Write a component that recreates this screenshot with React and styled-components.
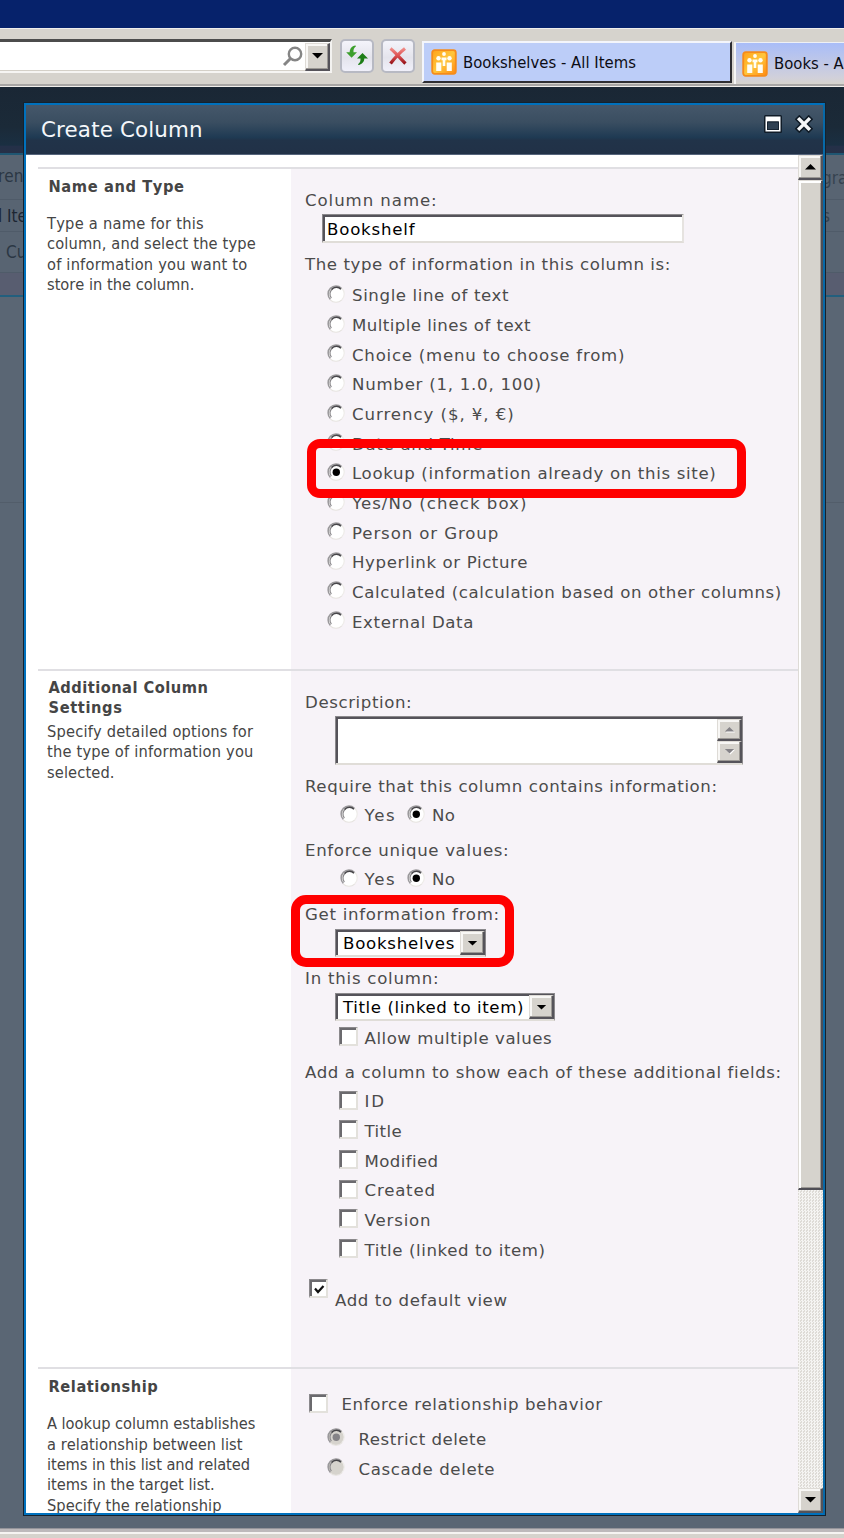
import React from 'react';
import styled, { createGlobalStyle, css } from 'styled-components';

const wide = `'DejaVu Sans', Verdana, sans-serif`;
const narrow = `'DejaVu Sans Condensed', 'DejaVu Sans', Tahoma, sans-serif`;

const GlobalStyle = createGlobalStyle`
  *, *::before, *::after { box-sizing: border-box; }
  html, body { margin: 0; padding: 0; }
  body { width: 844px; height: 1538px; overflow: hidden; background: #5a6674; font-kerning: none; }
`;

const narrowText = css`
  font-family: ${narrow};
  font-stretch: condensed;
  white-space: nowrap;
`;

/* ---------- browser chrome ---------- */

const Screen = styled.div`
  position: relative;
  display: flex;
  flex-direction: column;
  width: 844px;
  height: 1538px;
  overflow: hidden;
  background: #5a6674;
`;

const WindowTitle = styled.div`
  flex: none;
  height: 28px;
  background: #06226b;
`;

const Toolbar = styled.div`
  flex: none;
  display: flex;
  align-items: flex-start;
  height: 59px;
  padding-top: 10px;
  background: #d6d3cd;
  border-top: 1px solid #efeeec;
  border-bottom: 1px solid #f1efec;
  box-shadow: inset 0 -2px 0 #a8a6a5;
  overflow: hidden;
`;

const AddressBar = styled.div`
  flex: none;
  display: flex;
  align-items: center;
  justify-content: flex-end;
  width: 332px;
  height: 34px;
  margin-right: 8px;
  background: #fff;
  border-top: 3px solid #4c4c4c;
  border-right: 2px solid #f3f2f0;
  border-bottom: 2px solid #f6f5f3;
  box-shadow: inset 0 -1px 0 #d4d0c8;
`;

const DropButton = styled.div`
  flex: none;
  display: flex;
  align-items: center;
  justify-content: center;
  width: ${(p) => p.$w || 25}px;
  height: ${(p) => p.$h || 27}px;
  background: #d6d3cd;
  border-style: solid;
  border-width: 1px 2px 2px 1px;
  border-color: #dedbd6 #55535a #55535a #dedbd6;
  box-shadow: inset -1px -1px 0 #9b9894, inset 2px 2px 0 #f8f7f5;
`;

const ToolButton = styled.div`
  flex: none;
  display: flex;
  align-items: center;
  justify-content: center;
  width: 34px;
  height: 34px;
  margin-right: 7px;
  border: 2px solid #b7b9c3;
  border-radius: 5px;
  background: linear-gradient(#f4f4fb, #e4e4ec 55%, #f0f0fa);
`;

const Tab = styled.div`
  flex: none;
  display: flex;
  align-items: center;
  gap: 6px;
  ${narrowText}
  font-size: 16.5px;
  color: #0c0c14;
  ${(p) =>
    p.$active
      ? css`
          width: 310px;
          height: 42px;
          margin: 2px 2px 0 0;
          padding: 0 0 0 7px;
          background: #bccdf8;
          border-style: solid;
          border-width: 2px;
          border-color: #f3f5fb #2e2e33 #2e2e33 #f3f5fb;
        `
      : css`
          width: 200px;
          height: 42px;
          margin-top: 3px;
          padding: 0 0 0 6px;
          background: linear-gradient(#a9bdf8, #d1d0da 85%, #d6d3cd);
          border-left: 2px solid #f6f6f6;
          border-top: 1px solid #eef0f5;
        `}
`;

const TabLabel = styled.span`
  letter-spacing: 0.02px;
`;

/* ---------- dimmed page behind the dialog ---------- */

const Backdrop = styled.div`
  flex: 1;
  display: flex;
  flex-direction: column;
  background: #5a6674;
`;

const SiteHeader = styled.div`
  height: 68px;
  background: linear-gradient(#1a2735 0%, #1b2a38 60%, #1a2f42 88%, #243048 90%, #263047 100%);
  border-bottom: 2px solid #1f5672;
`;

const RibbonRow = styled.div`
  display: flex;
  justify-content: space-between;
  align-items: center;
  height: ${(p) => p.$h}px;
  padding: 0 0 0 ${(p) => p.$indent || 0}px;
  background: ${(p) => p.$bg || '#586472'};
  border-bottom: ${(p) => p.$line || '1px solid #4f5b69'};
  overflow: hidden;
  ${narrowText}
  font-size: 17px;
  color: ${(p) => p.$color || '#2b3744'};
`;

const RibbonStart = styled.span`
  margin-left: -2px;
  margin-top: ${(p) => p.$shift || 0}px;
`;

const RibbonEnd = styled.span`
  width: 22px;
  padding-top: ${(p) => p.$drop}px;
  color: #35424f;
`;

const PageArea = styled.div`
  height: 206px;
  border-bottom: 1px solid #525d6a;
`;

const StatusBar = styled.div`
  flex: none;
  height: 10px;
  background: #d6d3cd;
  border-top: 1px solid #94949a;
  box-shadow: inset 0 3px 0 #bdb9bb, inset 0 5px 0 #f6f4f2;
`;

/* ---------- dialog ---------- */

const Dialog = styled.div`
  position: absolute;
  left: 24px;
  top: 103px;
  width: 801px;
  height: 1412px;
  display: flex;
  flex-direction: column;
  border: 2px solid #0071bd;
  border-right-color: #0769a8;
  box-shadow: 0 0 0 1px #15222e;
  background: #fff;
`;

const DialogTitle = styled.div`
  flex: none;
  display: flex;
  align-items: flex-start;
  height: 50px;
  padding: 9px 10px 0 15px;
  background: linear-gradient(#45576a 0%, #3a4e61 35%, #1f3a53 66%, #213349 72%, #213147 100%);
  border-bottom: 1px solid #56657c;
`;

const DialogName = styled.h1`
  flex: 1;
  margin: 0;
  font: 400 21.4px/32px ${wide};
  letter-spacing: 0.15px;
  color: #f4f7fa;
`;

const WindowIcons = styled.div`
  display: flex;
  gap: 12px;
  align-items: center;
`;

const DialogBody = styled.div`
  flex: 1;
  display: flex;
  min-height: 0;
`;

const Form = styled.div`
  width: 772px;
  padding: 12px 0 0 12px;
  overflow: hidden;
`;

const Section = styled.section`
  position: relative;
  display: flex;
  height: ${(p) => p.$h}px;
  border-top: 2px solid #e0dfe3;
`;

const Aside = styled.div`
  flex: none;
  width: 253px;
  padding: ${(p) => p.$top ?? 8}px 0 0 9px;
  ${narrowText}
  color: #454545;
`;

const Heading = styled.h2`
  margin: 0 0 ${(p) => p.$gap}px 1.5px;
  font-size: 16.3px;
  font-weight: 700;
  line-height: 20.4px;
  letter-spacing: ${(p) => p.$ls ?? 0.5}px;
`;

const Help = styled.p`
  margin: 0;
  font-size: 16.3px;
  line-height: 20.35px;
`;

const Line = styled.span`
  display: block;
  letter-spacing: ${(p) => p.$ls ?? 0.12}px;
`;

const Fields = styled.div`
  flex: 1;
  padding: ${(p) => p.$top}px 0 0 14px;
  background: #f7f3f8;
  font: 16.6px/22px ${wide};
  color: #4b4b4b;
  white-space: nowrap;
`;

const Label = styled.div`
  height: 22px;
  margin-top: ${(p) => p.$mt || 0}px;
  letter-spacing: ${(p) => p.$ls ?? 0.57}px;
`;

const Row = styled.div`
  display: flex;
  align-items: center;
  height: 29.67px;
  margin-top: ${(p) => p.$mt || 0}px;
  padding-left: ${(p) => p.$indent}px;
`;

const Caption = styled.span`
  margin-left: ${(p) => p.$gap ?? 7}px;
  margin-right: ${(p) => p.$after || 0}px;
  margin-top: ${(p) => p.$drop || 0}px;
  letter-spacing: ${(p) => p.$ls ?? 0.57}px;
`;

const sunken = css`
  background: #fff;
  border-style: solid;
  border-width: 1px 2px 2px 1px;
  border-color: #8b898c #e6e3e0 #e0ddd8 #8b898c;
  box-shadow: inset 2px 2px 0 #55535a;
`;

const TextInput = styled.div`
  ${sunken}
  width: 362px;
  height: 29px;
  margin: 2px 0 0 17px;
  padding: 3px 0 0 4px;
  line-height: 24px;
  letter-spacing: 0.8px;
  color: #000;
`;

const TextArea = styled.div`
  ${sunken}
  display: flex;
  justify-content: flex-end;
  width: 408px;
  height: 49px;
  margin: 2.5px 0 0 30px;
  padding-top: 2px;
  border-right: 1px solid #8b898c;
`;

const Spinner = styled.div`
  display: flex;
  flex-direction: column;
`;

const Select = styled.div`
  ${sunken}
  display: flex;
  justify-content: space-between;
  align-items: center;
  width: ${(p) => p.$w}px;
  height: 28px;
  margin: ${(p) => p.$mt}px 0 0 30px;
  padding: 2px 0 0 7px;
  border-right: 1px solid #8b898c;
  color: #000;
  letter-spacing: ${(p) => p.$ls}px;
`;

const SelectValue = styled.span`
  padding-top: 2px;
`;

const Box = styled.span`
  flex: none;
  display: flex;
  align-items: center;
  justify-content: center;
  width: 19px;
  height: 19px;
  margin-bottom: ${(p) => p.$lift ?? 4}px;
  padding: 2px 0 0 2px;
  background: #fff;
  border-style: solid;
  border-width: 1px 2px 2px 1px;
  border-color: #8b898c #e3e1dc #e3e1dc #8b898c;
  box-shadow: inset 2px 2px 0 #6b6a6e;
`;

const RadioMark = styled.svg`
  flex: none;
  width: 18px;
  height: 18px;
  margin-bottom: 5px;
`;

const Highlight = styled.div`
  position: absolute;
  left: ${(p) => p.$x}px;
  top: ${(p) => p.$y}px;
  width: ${(p) => p.$w}px;
  height: ${(p) => p.$h}px;
  border: 9px solid #ff0000;
  border-radius: ${(p) => p.$r}px;
`;

/* ---------- scrollbar ---------- */

const ScrollTrack = styled.div`
  display: flex;
  flex-direction: column;
  width: 25px;
  background: repeating-conic-gradient(#f5f4f2 0 25%, #dedbd6 0 50%) 0 0 / 3px 3px;
`;

const ScrollThumb = styled.div`
  height: 1010px;
  background: #d6d3cd;
  border-style: solid;
  border-width: 1px 2px 2px 1px;
  border-color: #dedbd6 #4f4e55 #4f4e55 #dedbd6;
  box-shadow: inset 2px 2px 0 #fff, inset -1px -1px 0 #9b9894;
`;

const TrackGap = styled.div`
  flex: 1;
`;

/* ---------- drawings ---------- */

const Arrow = ({ up, size = 11, color = '#000', shade }) => (
  <svg width={size + 2} height={size / 2 + 2} viewBox="0 0 13 7.5">
    {shade && <path d={up ? 'M2 7.5h11L7.5 2z' : 'M2 2h11L7.5 7.5z'} fill="#fff" />}
    <path d={up ? 'M1 6.5h11L6.5 1z' : 'M1 1h11L6.5 6.5z'} fill={color} />
  </svg>
);

const Radio = ({ on, disabled }) => (
  <RadioMark viewBox="0 0 18 18">
    <circle cx="9" cy="9" r="8.2" fill={disabled ? '#d6d3cd' : '#fff'} />
    <path d="M14.8 14.8A8.1 8.1 0 0 1 3.2 14.8" stroke="#e6e3df" strokeWidth="1.2" fill="none" />
    <path d="M14.8 3.2A8.1 8.1 0 0 1 14.8 14.8" stroke="#eeece9" strokeWidth="1.2" fill="none" />
    <path d="M3.4 14.4A7.7 7.7 0 0 1 14.4 3.4" stroke="#9a989b" strokeWidth="1.5" fill="none" />
    <path d="M4.4 13A6.3 6.3 0 0 1 5.2 4.2" stroke="#8b898c" strokeWidth="1.2" fill="none" />
    <path d="M4.6 4.6A6.3 6.3 0 0 1 14 4.2" stroke="#47464a" strokeWidth="1.6" fill="none" />
    {on && <circle cx="9.3" cy="9.3" r="3.7" fill={disabled ? '#858387' : '#000'} />}
  </RadioMark>
);

const Check = ({ on, lift }) => (
  <Box $lift={lift}>
    {on && (
      <svg width="13" height="13" viewBox="0 0 13 13">
        <path d="M2 5.5L5 9l5.5-6" stroke="#111" strokeWidth="2.2" fill="none" />
      </svg>
    )}
  </Box>
);

const Magnifier = () => (
  <svg width="24" height="24" viewBox="0 0 24 24" fill="none" stroke="#858585">
    <circle cx="14" cy="9" r="6.2" strokeWidth="2.4" />
    <path d="M9.5 13.5L3 20" strokeWidth="3" />
  </svg>
);

const RefreshIcon = () => (
  <svg width="26" height="26" viewBox="0 0 26 26">
    <path d="M11.500 2.500C7.500 3 5.800 6 5.700 9.300H2.200L7.600 14.800 13 9.300H9.500C9.300 6.500 9.900 4.700 12 3.300z" fill="#3c9f2c" />
    <path d="M14.500 22C18.200 21.300 20.300 18.500 20.300 15.500H24L18.500 10 13 15.500H16.500C16.600 18 16.200 19.800 14 21.200z" fill="#1d7d16" />
  </svg>
);

const StopIcon = () => (
  <svg width="20" height="20" viewBox="0 0 20 20" fill="none" strokeWidth="3.300">
    <defs>
      <linearGradient id="stop" x1="0" y1="0" x2="0" y2="1">
        <stop offset="0" stopColor="#f08a86" />
        <stop offset=".5" stopColor="#dc4f50" />
        <stop offset="1" stopColor="#96141a" />
      </linearGradient>
    </defs>
    <path d="M2.500 2.500C6 5 14 14 17.500 17.500M17 2.500C13 5.500 6 13 2.500 17.500" stroke="url(#stop)" />
  </svg>
);

const SiteIcon = () => (
  <svg width="26" height="26" viewBox="0 0 26 26">
    <defs>
      <linearGradient id="site" x1="0" y1="0" x2="1" y2="1">
        <stop offset="0" stopColor="#ffa21a" />
        <stop offset=".5" stopColor="#ffc63c" />
        <stop offset="1" stopColor="#ff8a12" />
      </linearGradient>
    </defs>
    <rect x="1.200" y="1.200" width="23.600" height="23.600" rx="2.500" fill="url(#site)" stroke="#f68c1a" strokeWidth="1.800" />
    <g fill="#fffdf4">
      <circle cx="13" cy="5" r="1.900" />
      <circle cx="7.500" cy="9.300" r="2.200" />
      <circle cx="18.500" cy="9.300" r="2.200" />
      <path d="M10.500 8.500h5v2.700h-1.200V17h-2.600v-5.800h-1.200z" />
      <path d="M5.200 13.500h5.100V22H5.200zM15.700 13.500h5.100V22h-5.100z" />
    </g>
  </svg>
);

const MaximizeIcon = () => (
  <svg width="20" height="20" viewBox="0 0 20 20">
    <rect x="1" y="1" width="18" height="18" rx="1.500" fill="#101c28" />
    <path fillRule="evenodd" fill="#fff" d="M2.500 2.500h15v15h-15zM4 7.500v8.500h12V7.500z" />
    <path d="M4.500 8h11v7.500h-11z" fill="#2e4052" stroke="#152331" />
  </svg>
);

const CloseIcon = () => (
  <svg width="18" height="18" viewBox="0 0 18 18" fill="none">
    <path d="M4.300 4.300l9.400 9.400M13.700 4.300l-9.400 9.400" stroke="#0f1a25" strokeWidth="6.400" strokeLinecap="square" />
    <path d="M4.300 4.300l9.400 9.400M13.700 4.300l-9.400 9.400" stroke="#f4f6f8" strokeWidth="3.400" strokeLinecap="square" />
  </svg>
);

/* ---------- content ---------- */

const columnTypes = [
  { text: 'Single line of text', ls: 0.61 },
  { text: 'Multiple lines of text', ls: 0.45 },
  { text: 'Choice (menu to choose from)', ls: 0.77 },
  { text: 'Number (1, 1.0, 100)', ls: 0.75 },
  { text: 'Currency ($, ¥, €)', ls: 0.94 },
  { text: 'Date and Time', ls: 0.7 },
  { text: 'Lookup (information already on this site)', ls: 0.66, on: true },
  { text: 'Yes/No (check box)', ls: 1.02 },
  { text: 'Person or Group', ls: 0.89 },
  { text: 'Hyperlink or Picture', ls: 0.61 },
  { text: 'Calculated (calculation based on other columns)', ls: 0.59 },
  { text: 'External Data', ls: 0.64 },
];

const extraFields = [
  { text: 'ID', ls: 1.9 },
  { text: 'Title', ls: 0.4 },
  { text: 'Modified', ls: 0.4 },
  { text: 'Created', ls: 0.8 },
  { text: 'Version', ls: 0.85 },
  { text: 'Title (linked to item)', ls: 0.6 },
];

const YesNo = ({ mt }) => (
  <Row $indent={35} $mt={mt}>
    <Radio />
    <Caption $gap={6.5} $after={11} $ls={1.7}>Yes</Caption>
    <Radio on />
    <Caption $gap={6.5} $ls={0.4}>No</Caption>
  </Row>
);

export default function App() {
  return (
    <>
      <GlobalStyle />
      <Screen>
        <WindowTitle />
        <Toolbar>
          <AddressBar>
            <Magnifier />
            <DropButton $w={25} $h={28}><Arrow size={11} /></DropButton>
          </AddressBar>
          <ToolButton><RefreshIcon /></ToolButton>
          <ToolButton><StopIcon /></ToolButton>
          <Tab $active><SiteIcon /><TabLabel>Bookshelves - All Items</TabLabel></Tab>
          <Tab><SiteIcon /><TabLabel>Books - All Items</TabLabel></Tab>
        </Toolbar>
        <Backdrop>
          <SiteHeader />
          <RibbonRow $h={45}><RibbonStart $shift={-2}>ren</RibbonStart><RibbonEnd $drop={2}>gra</RibbonEnd></RibbonRow>
          <RibbonRow $h={32} $color="#1c2632"><RibbonStart>l Ite</RibbonStart><RibbonEnd $drop={0}>s</RibbonEnd></RibbonRow>
          <RibbonRow $h={41} $indent={8}><RibbonStart>Cu</RibbonStart></RibbonRow>
          <RibbonRow $h={24} $bg="#585d70" $line="2px solid #225f7e" />
          <PageArea />
        </Backdrop>
        <StatusBar />

        <Dialog>
          <DialogTitle>
            <DialogName>Create Column</DialogName>
            <WindowIcons><MaximizeIcon /><CloseIcon /></WindowIcons>
          </DialogTitle>
          <DialogBody>
            <Form>
              <Section $h={502}>
                <Aside>
                  <Heading $gap={16.5} $ls={0.6}>Name and Type</Heading>
                  <Help>
                    <Line $ls={0.25}>Type a name for this</Line>
                    <Line $ls={0.14}>column, and select the type</Line>
                    <Line $ls={0.2}>of information you want to</Line>
                    <Line $ls={0}>store in the column.</Line>
                  </Help>
                </Aside>
                <Fields $top={20.5}>
                  <Label $ls={0.93}>Column name:</Label>
                  <TextInput>Bookshelf</TextInput>
                  <Label $mt={11}>The type of information in this column is:</Label>
                  {columnTypes.map((t, i) => (
                    <Row key={t.text} $indent={22} $mt={i === 0 ? 6.1 : 0}>
                      <Radio on={t.on} />
                      <Caption $ls={t.ls}>{t.text}</Caption>
                    </Row>
                  ))}
                </Fields>
                <Highlight $x={269} $y={270} $w={439} $h={59} $r={13} />
              </Section>

              <Section $h={698}>
                <Aside $top={7}>
                  <Heading $gap={3}>
                    <Line $ls={0.47}>Additional Column</Line>
                    <Line $ls={0.6}>Settings</Line>
                  </Heading>
                  <Help>
                    <Line $ls={0.18}>Specify detailed options for</Line>
                    <Line $ls={0.2}>the type of information you</Line>
                    <Line>selected.</Line>
                  </Help>
                </Aside>
                <Fields $top={20.5}>
                  <Label $ls={0.6}>Description:</Label>
                  <TextArea>
                    <Spinner>
                      <DropButton $w={25} $h={22}><Arrow up size={9} color="#858387" shade /></DropButton>
                      <DropButton $w={25} $h={22}><Arrow size={9} color="#858387" shade /></DropButton>
                    </Spinner>
                  </TextArea>
                  <Label $mt={11}>Require that this column contains information:</Label>
                  <YesNo mt={3.5} />
                  <Label $mt={9} $ls={0.66}>Enforce unique values:</Label>
                  <YesNo mt={3.5} />
                  <Label $mt={9} $ls={0.7}>Get information from:</Label>
                  <Select $w={151} $mt={2.5} $ls={0.75}>
                    <SelectValue>Bookshelves</SelectValue>
                    <DropButton $w={25} $h={24}><Arrow size={9} /></DropButton>
                  </Select>
                  <Label $mt={11.5} $ls={0.76}>In this column:</Label>
                  <Select $w={220} $mt={2.5} $ls={0.59}>
                    <SelectValue>Title (linked to item)</SelectValue>
                    <DropButton $w={25} $h={24}><Arrow size={9} /></DropButton>
                  </Select>
                  <Row $indent={34} $mt={3}><Check /><Caption $gap={6.5} $ls={0.53}>Allow multiple values</Caption></Row>
                  <Label $mt={8.5} $ls={0.6}>Add a column to show each of these additional fields:</Label>
                  {extraFields.map((f, i) => (
                    <Row key={f.text} $indent={34} $mt={i === 0 ? 3.5 : 0}>
                      <Check />
                      <Caption $gap={6.5} $ls={f.ls}>{f.text}</Caption>
                    </Row>
                  ))}
                  <Row $indent={4} $mt={14.5}><Check on lift={12} /><Caption $drop={12} $ls={0.6}>Add to default view</Caption></Row>
                </Fields>
                <Highlight $x={253} $y={224} $w={223} $h={72} $r={15} />
              </Section>

              <Section $h={146}>
                <Aside>
                  <Heading $gap={17} $ls={0.55}>Relationship</Heading>
                  <Help>
                    <Line $ls={-0.04}>A lookup column establishes</Line>
                    <Line $ls={0.05}>a relationship between list</Line>
                    <Line $ls={-0.08}>items in this list and related</Line>
                    <Line $ls={0}>items in the target list.</Line>
                    <Line $ls={0.05}>Specify the relationship</Line>
                  </Help>
                </Aside>
                <Fields $top={21.5}>
                  <Row $indent={4}><Check /><Caption $gap={13.5} $ls={0.6}>Enforce relationship behavior</Caption></Row>
                  <Row $indent={22} $mt={5}><Radio on disabled /><Caption $gap={13.5} $ls={0.5}>Restrict delete</Caption></Row>
                  <Row $indent={22}><Radio disabled /><Caption $gap={13.5} $ls={0.62}>Cascade delete</Caption></Row>
                </Fields>
              </Section>
            </Form>
            <ScrollTrack>
              <DropButton $w={25} $h={25}><Arrow up size={11} /></DropButton>
              <ScrollThumb />
              <TrackGap />
              <DropButton $w={25} $h={25}><Arrow size={11} /></DropButton>
            </ScrollTrack>
          </DialogBody>
        </Dialog>
      </Screen>
    </>
  );
}
